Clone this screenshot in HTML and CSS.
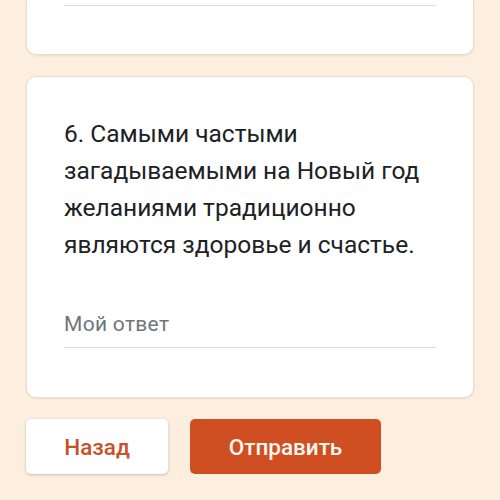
FILE: index.html
```html
<!DOCTYPE html>
<html lang="ru">
<head>
<meta charset="utf-8">
<link rel="stylesheet" href="styles.css">
</head>
<body>
<div class="page">
  <div class="card card-prev">
    <div class="answer-line"></div>
  </div>
  <div class="card card-question">
    <div class="question">6. Самыми частыми загадываемыми на Новый год желаниями традиционно являются здоровье и счастье.</div>
    <div class="answer">
      <span class="placeholder">Мой ответ</span>
    </div>
  </div>
  <div class="actions">
    <button class="btn btn-back">Назад</button>
    <button class="btn btn-submit">Отправить</button>
  </div>
</div>
</body>
</html>
```
FILE: styles.css
```css
html, body {
  margin: 0;
  padding: 0;
  background: #fcefdf;
}
body {
  font-family: Roboto, "Noto Sans", sans-serif;
  width: 500px;
  height: 500px;
  overflow: hidden;
}
.page {
  padding: 0 26px 0 26px;
}
.card {
  background: #ffffff;
  border: 1px solid #e6ded3;
  border-radius: 10px;
  box-shadow: 0 1px 2px rgba(120, 90, 50, 0.12);
  box-sizing: border-box;
}
.card-prev {
  border-top: none;
  border-radius: 0 0 10px 10px;
  height: 55px;
  padding: 5px 37px 0 37px;
}
.answer-line {
  height: 1px;
  background: #dcdcdc;
}
.card-question {
  margin-top: 21px;
  height: 322px;
  padding: 38px 37px 0 37px;
}
.question {
  font-size: 24.5px;
  line-height: 37px;
  color: #202124;
}
.answer {
  margin-top: 49px;
  border-bottom: 1px solid #d9d9d9;
  padding-bottom: 11px;
}
.placeholder {
  display: block;
  font-size: 21px;
  color: #70757a;
  letter-spacing: 0.3px;
}
.actions {
  display: flex;
  gap: 22px;
  margin-top: 21px;
}
.btn {
  font-family: Roboto, "Noto Sans", sans-serif;
  font-size: 22.5px;
  font-weight: 500;
  height: 55px;
  border-radius: 5px;
  border: none;
  cursor: pointer;
  padding: 0;
}
.btn-back {
  width: 142px;
  background: #ffffff;
  color: #c7522a;
  box-shadow: 0 1px 3px rgba(90, 60, 30, 0.3);
}
.btn-submit {
  width: 191px;
  background: #d04f22;
  color: #fff7ef;
}
```
